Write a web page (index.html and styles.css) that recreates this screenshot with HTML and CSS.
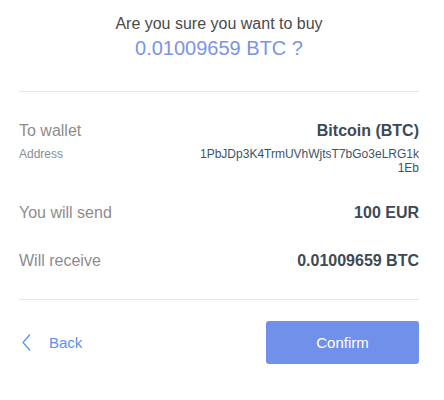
FILE: index.html
```html
<!DOCTYPE html>
<html>
<head>
<meta charset="utf-8">
<link rel="stylesheet" href="styles.css">
</head>
<body>
<div class="page">
  <header class="head">
    <div class="question">Are you sure you want to buy</div>
    <div class="amount">0.01009659 BTC ?</div>
  </header>
  <hr class="divider">
  <section class="details">
    <div class="row wallet">
      <div class="line">
        <span class="label">To wallet</span>
        <span class="value">Bitcoin (BTC)</span>
      </div>
      <div class="line sub">
        <span class="sublabel">Address</span>
        <span class="address">1PbJDp3K4TrmUVhWjtsT7bGo3eLRG1k1Eb</span>
      </div>
    </div>
    <div class="row">
      <div class="line">
        <span class="label">You will send</span>
        <span class="value">100 EUR</span>
      </div>
    </div>
    <div class="row">
      <div class="line">
        <span class="label">Will receive</span>
        <span class="value">0.01009659 BTC</span>
      </div>
    </div>
  </section>
  <hr class="divider">
  <footer class="actions">
    <a class="back" href="#">
      <svg class="chev" width="9" height="17" viewBox="0 0 9 17"><path d="M8 0.5 L1 8.5 L8 16.5" fill="none" stroke="#5b8ef0" stroke-width="1.2"/></svg>
      <span>Back</span>
    </a>
    <button class="confirm">Confirm</button>
  </footer>
</div>
</body>
</html>
```
FILE: styles.css
```css
html, body {
  margin: 0;
  padding: 0;
  background: #ffffff;
}
body {
  font-family: "Liberation Sans", Arial, sans-serif;
}
.page {
  width: 400px;
  padding: 0 25px 0 19px;
}
.head {
  text-align: center;
  padding-top: 13px;
}
.question {
  font-size: 16px;
  line-height: 22px;
  color: #4a4a4a;
}
.amount {
  font-size: 20px;
  line-height: 26px;
  color: #7b93ea;
}
.divider {
  border: 0;
  border-top: 1px solid #e6e6e6;
  margin: 0;
  height: 0;
}
.head + .divider {
  margin-top: 30px;
}
.details {
  padding: 29px 0 28px;
  display: flex;
  flex-direction: column;
  gap: 28px;
}
.line {
  display: flex;
  justify-content: space-between;
  align-items: flex-start;
  font-size: 16px;
  line-height: 20px;
}
.label {
  color: #8c8c8c;
}
.value {
  color: #3d4a55;
  font-weight: bold;
}
.line.sub {
  margin-top: 6px;
  font-size: 12px;
  line-height: 14px;
}
.sublabel {
  color: #8c8c8c;
}
.address {
  color: #3c5566;
  width: 222px;
  text-align: right;
  word-break: break-all;
}
.actions {
  display: flex;
  justify-content: space-between;
  align-items: center;
  padding-top: 21px;
}
.back {
  display: flex;
  align-items: center;
  gap: 18px;
  color: #5b8ef0;
  text-decoration: none;
  font-size: 15px;
  padding-left: 3px;
}
.chev {
  display: block;
}
.confirm {
  width: 153px;
  height: 43px;
  border: 0;
  border-radius: 3px;
  background: #7190ea;
  color: #ffffff;
  font-family: "Liberation Sans", Arial, sans-serif;
  font-size: 15px;
}
```
